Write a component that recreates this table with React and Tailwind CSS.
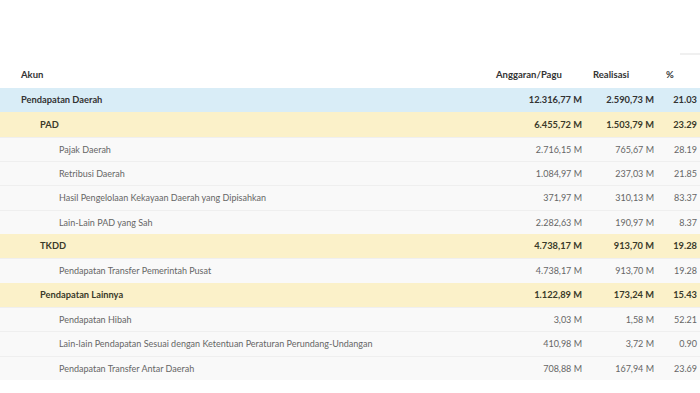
import React from "react";

const rows = [
  { t: "Pendapatan Daerah", a: "12.316,77 M", r: "2.590,73 M", p: "21.03", k: "blue", lvl: 0 },
  { t: "PAD", a: "6.455,72 M", r: "1.503,79 M", p: "23.29", k: "yellow", lvl: 1 },
  { t: "Pajak Daerah", a: "2.716,15 M", r: "765,67 M", p: "28.19", k: "d", lvl: 2 },
  { t: "Retribusi Daerah", a: "1.084,97 M", r: "237,03 M", p: "21.85", k: "d", lvl: 2 },
  { t: "Hasil Pengelolaan Kekayaan Daerah yang Dipisahkan", a: "371,97 M", r: "310,13 M", p: "83.37", k: "d", lvl: 2 },
  { t: "Lain-Lain PAD yang Sah", a: "2.282,63 M", r: "190,97 M", p: "8.37", k: "d", lvl: 2 },
  { t: "TKDD", a: "4.738,17 M", r: "913,70 M", p: "19.28", k: "yellow", lvl: 1 },
  { t: "Pendapatan Transfer Pemerintah Pusat", a: "4.738,17 M", r: "913,70 M", p: "19.28", k: "d", lvl: 2 },
  { t: "Pendapatan Lainnya", a: "1.122,89 M", r: "173,24 M", p: "15.43", k: "yellow", lvl: 1 },
  { t: "Pendapatan Hibah", a: "3,03 M", r: "1,58 M", p: "52.21", k: "d", lvl: 2 },
  { t: "Lain-lain Pendapatan Sesuai dengan Ketentuan Peraturan Perundang-Undangan", a: "410,98 M", r: "3,72 M", p: "0.90", k: "d", lvl: 2 },
  { t: "Pendapatan Transfer Antar Daerah", a: "708,88 M", r: "167,94 M", p: "23.69", k: "d", lvl: 2 },
];

export default function App() {
  return (
    <div
      className="w-[700px] h-[393px] bg-white overflow-hidden"
      style={{ fontFamily: '"Lato", "Liberation Sans", sans-serif' }}
    >
      <div className="h-[63px] flex justify-end items-end">
        <div className="w-[20px] h-[2px] bg-[#f0f0f0] mb-[8px]"></div>
      </div>
      <div className="flex items-center h-[25px] font-bold text-[#333] text-[9.5px]">
        <div className="flex-1 pl-[21px]">Akun</div>
        <div className="w-[106px] pl-[10px]">Anggaran/Pagu</div>
        <div className="w-[72px] pl-[1px]">Realisasi</div>
        <div className="w-[36px] pl-[2px]">%</div>
      </div>
      {rows.map((row, i) => {
        const bg =
          row.k === "blue"
            ? "bg-[#d9edf7] font-bold text-[#333] text-[9.3px]"
            : row.k === "yellow"
            ? "bg-[#fbf1c9] font-bold text-[#3a3a2a] text-[9.3px]"
            : "bg-[#f9f9f9] text-[#666] text-[9px] border-t border-[#efefef]";
        const pad = row.lvl === 0 ? "pl-[21px]" : row.lvl === 1 ? "pl-[40px]" : "pl-[59px]";
        return (
          <div key={i} className={`flex items-center h-[24.33px] ${bg}`}>
            <div className={`flex-1 whitespace-nowrap ${pad}`}>{row.t}</div>
            <div className="w-[106px] pr-[10px] text-right whitespace-nowrap">{row.a}</div>
            <div className="w-[72px] pr-[10px] text-right whitespace-nowrap">{row.r}</div>
            <div className="w-[36px] pr-[3px] text-right whitespace-nowrap">{row.p}</div>
          </div>
        );
      })}
    </div>
  );
}
